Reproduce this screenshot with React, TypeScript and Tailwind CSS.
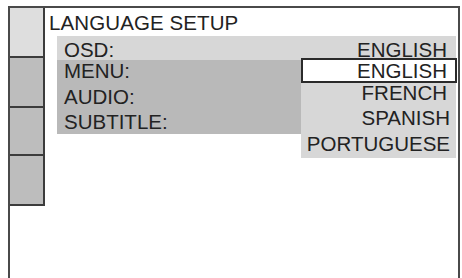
const font = { fontFamily: '"Liberation Sans", Arial, sans-serif' };

const SIDE_BOXES = ['bg-[#dedede]', 'bg-[#bdbdbd]', 'bg-[#bdbdbd]', 'bg-[#bdbdbd]'];

export default function App() {
  return (
    <div
      className="h-[278px] w-[462px] overflow-hidden bg-white pl-[8px] pt-[6px] text-[20.5px] leading-[20px] text-[#222]"
      style={font}
    >
      <div className="flex h-[290px] w-[452px] border-x-2 border-t-2 border-[#4a4a4a]">
        {/* side tabs */}
        <div className="flex w-[35px] shrink-0 flex-col self-start">
          {SIDE_BOXES.map((bg, i) => (
            <div
              key={i}
              className={`${bg} border-b-2 border-r-2 border-[#3c3c3c] ${i === 2 ? 'h-[48px]' : 'h-[50px]'}`}
            />
          ))}
        </div>

        <div className="flex flex-1 flex-col">
          <div className="pl-[4px] pt-[3px] leading-[24px] tracking-[0.1px]">LANGUAGE SETUP</div>

          <div className="ml-[12px] mt-[1px] w-[399px]">
            {/* OSD row */}
            <div className="flex h-[24px] justify-between bg-[#d7d7d7] pt-[4px]">
              <span className="pl-[7px]">OSD:</span>
              <span className="pr-[9px]">ENGLISH</span>
            </div>

            <div className="flex items-start">
              <div className="flex h-[74px] w-[244px] flex-col bg-[#b9b9b9] pl-[7px] pt-[1px]">
                <div>MENU:</div>
                <div className="mt-[6px]">AUDIO:</div>
                <div className="mt-[5px]">SUBTITLE:</div>
              </div>

              <div className="flex h-[98px] w-[155px] flex-col bg-[#d7d7d7] text-right">
                <div className="-mr-[1px] -mt-[2px] h-[25px] border-2 border-[#2a2a2a] bg-white pr-[8px] pt-[1px]">
                  ENGLISH
                </div>
                <div className="pr-[9px]">FRENCH</div>
                <div className="mt-[5px] pr-[6px]">SPANISH</div>
                <div className="mt-[6px] pr-[6px]">PORTUGUESE</div>
              </div>
            </div>
          </div>
        </div>
      </div>
    </div>
  );
}
